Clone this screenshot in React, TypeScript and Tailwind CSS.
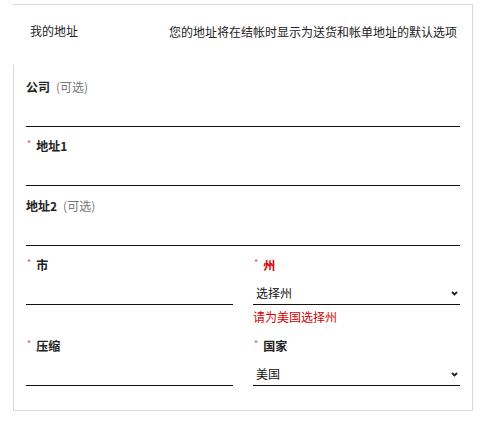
import React from "react";

const font = { fontFamily: '"Noto Sans CJK SC", "Noto Sans", sans-serif' };

function Star() {
  return <span className="relative top-[-2px] ml-[1px] mr-[5px] text-[9px] text-[#d9534f]">*</span>;
}

function Label({ req, text, opt, red }: { req?: boolean; text: string; opt?: boolean; red?: boolean }) {
  return (
    <div className="flex h-5 items-center text-[12px] leading-5">
      {req && <Star />}
      <span className={`font-bold ${red ? "text-[#d40000]" : "text-[#222]"}`}>{text}</span>
      {opt && <span className="ml-[6px] text-[#777]">(可选)</span>}
    </div>
  );
}

function Chevron() {
  return (
    <svg width="7" height="5" viewBox="0 0 7 5" className="mb-[5px] mr-[2px]">
      <polyline points="1,1 3.5,3.5 6,1" fill="none" stroke="#222" strokeWidth="1.8" />
    </svg>
  );
}

function Field({ req, text, opt, red, select }: { req?: boolean; text: string; opt?: boolean; red?: boolean; select?: string }) {
  return (
    <div className="flex flex-col">
      <Label req={req} text={text} opt={opt} red={red} />
      <div className="flex h-[30px] items-end justify-between border-b border-[#111] pb-[3px]">
        {select ? (
          <>
            <span className="pl-[3px] text-[12px] leading-4 text-[#111]">{select}</span>
            <Chevron />
          </>
        ) : null}
      </div>
    </div>
  );
}

export default function App() {
  return (
    <div className="h-[430px] w-[485px] bg-white pl-[13px] pt-[4px]" style={font}>
      <div className="w-[460px] border-b border-r border-t border-[#dadada]">
        <div className="flex h-[60px] items-start justify-between pl-[17px] pr-[15px] pt-[18px] text-[12px] leading-4 text-[#222]">
          <span>我的地址</span>
          <span className="mt-[1px]">您的地址将在结帐时显示为送货和帐单地址的默认选项</span>
        </div>
        <div className="flex flex-col gap-[9px] border-l border-[#dadada] pb-[24px] pl-[12px] pr-[12px] pt-[12px]">
          <Field text="公司" opt />
          <Field req text="地址1" />
          <div className="mt-[1px]">
            <Field text="地址2" opt />
          </div>
          <div className="grid grid-cols-2 gap-x-[20px]">
            <Field req text="市" />
            <div className="flex flex-col">
              <Field req text="州" red select="选择州" />
              <div className="mt-[4px] text-[12px] leading-4 text-[#d40000]">请为美国选择州</div>
            </div>
          </div>
          <div className="mt-[2px] grid grid-cols-2 gap-x-[20px]">
            <Field req text="压缩" />
            <Field req text="国家" select="美国" />
          </div>
        </div>
      </div>
    </div>
  );
}
